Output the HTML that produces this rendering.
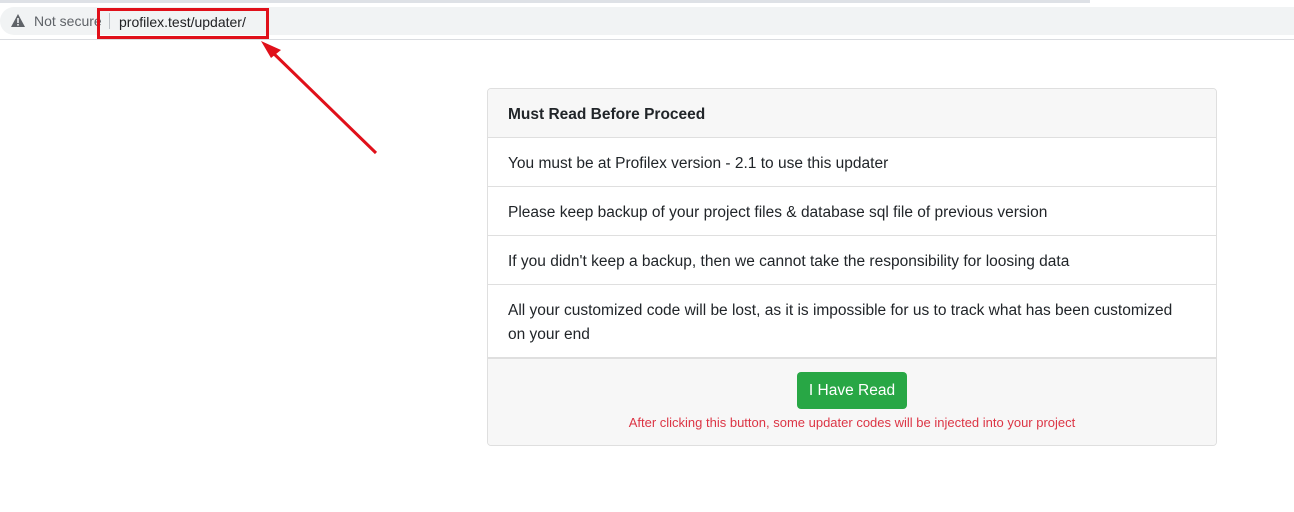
<!DOCTYPE html>
<html><head><style>
body{margin:0;width:1294px;height:512px;background:#fff;font-family:"Liberation Sans",sans-serif;position:relative;overflow:hidden;color:#212529}
.abs{position:absolute}
.row{position:absolute;left:0;right:0;border-top:1px solid #dfdfdf;padding-left:20px;font-size:15.5px;line-height:24px;box-sizing:border-box}
</style></head><body>
<div class="abs" style="left:0;top:0;width:1090px;height:3px;background:#dee1e6"></div>
<div class="abs" style="left:0;top:7px;width:1294px;height:28px;background:#f1f3f4;border-radius:14px 0 0 14px"></div>
<div class="abs" style="left:0;top:39px;width:1294px;height:1px;background:#dadce0"></div>
<svg class="abs" style="left:11px;top:14px" width="14" height="13" viewBox="0 0 14 13"><path d="M7 0L14 13H0Z" fill="#5f6368"/><rect x="6.2" y="4" width="1.6" height="5" fill="#f1f3f4"/><rect x="6.2" y="10" width="1.6" height="1.6" fill="#f1f3f4"/></svg>
<div class="abs" style="left:34px;top:13px;font-size:14px;color:#5f6368">Not secure</div>
<div class="abs" style="left:109px;top:13px;width:1px;height:16px;background:#bdc1c6"></div>
<div class="abs" style="left:119px;top:14px;font-size:14px;color:#202124">profilex.test/updater/</div>
<div class="abs" style="left:97px;top:8px;width:166px;height:25px;border:3px solid #e0101a"></div>
<svg class="abs" style="left:0;top:0" width="400" height="170"><line x1="376" y1="153" x2="268" y2="48" stroke="#e0101a" stroke-width="3"/><path d="M261 41L281 50L271 58Z" fill="#e0101a"/></svg>
<div class="abs" style="left:487px;top:88px;width:728px;height:356px;border:1px solid #dfdfdf;border-radius:4px;overflow:hidden">
<div class="row" style="top:0;height:49px;background:#f7f7f7;border-top:0;font-weight:bold;padding-top:14px">Must Read Before Proceed</div>
<div class="row" style="top:48px;height:49px;padding-top:14px">You must be at Profilex version - 2.1 to use this updater</div>
<div class="row" style="top:97px;height:49px;padding-top:14px">Please keep backup of your project files &amp; database sql file of previous version</div>
<div class="row" style="top:146px;height:49px;padding-top:14px">If you didn't keep a backup, then we cannot take the responsibility for loosing data</div>
<div class="row" style="top:195px;height:73px;padding-top:14px;padding-right:30px">All your customized code will be lost, as it is impossible for us to track what has been customized on your end</div>
<div class="row" style="top:268px;height:90px;background:#f7f7f7;border-top:2px solid #dfdfdf;padding:0;text-align:center">
<div style="display:inline-block;margin-top:13px;width:110px;height:37px;line-height:37px;background:#28a745;color:#fff;border-radius:4px;font-size:15.5px">I Have Read</div>
<div style="color:#dc3545;font-size:13px;margin-top:2px">After clicking this button, some updater codes will be injected into your project</div>
</div>
</div>
</body></html>
